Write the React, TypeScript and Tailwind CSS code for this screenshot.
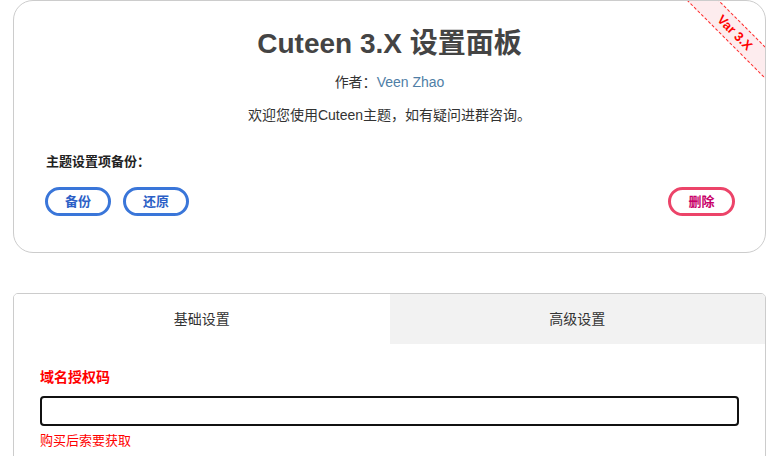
export default function App() {
  const font = { fontFamily: '"Liberation Sans", Arial, "Noto Sans CJK SC", sans-serif' };
  return (
    <div className="w-[766px] h-[456px] overflow-hidden bg-white pl-[13px] text-[#333]" style={font}>
      <div className="relative w-[753px] rounded-[20px] border border-[#cccccc] overflow-hidden pt-[25px] pb-[36px] px-[31px]">
        <div className="absolute right-[-42px] top-[20px] w-[144px] h-[23px] rotate-45 bg-[#fdecee] border-y border-dashed border-[#ff2a2a] flex items-center justify-center">
          <span className="text-[13px] font-bold text-[#ff0000] leading-none">Var 3.X</span>
        </div>
        <h1 className="text-center text-[28px] leading-[36px] font-bold text-[#444444]">Cuteen 3.X 设置面板</h1>
        <p className="mt-[10px] text-center text-[14px] leading-[20px] text-[#333]">
          作者：<span className="text-[#4f7ea6]">Veen Zhao</span>
        </p>
        <p className="mt-[13px] text-center text-[14px] leading-[20px] text-[#333]">欢迎您使用Cuteen主题，如有疑问进群咨询。</p>
        <p className="mt-[27px] ml-[1px] text-[13px] leading-[20px] font-bold text-[#222]">主题设置项备份：</p>
        <div className="mt-[15px] flex items-center">
          <button className="w-[66px] h-[29px] rounded-full border-[3px] border-[#3a76d9] text-[#2c5fc6] text-[13px] font-bold flex items-center justify-center">备份</button>
          <button className="ml-[12px] w-[66px] h-[29px] rounded-full border-[3px] border-[#3a76d9] text-[#2c5fc6] text-[13px] font-bold flex items-center justify-center">还原</button>
          <button className="ml-auto mr-[-1px] w-[67px] h-[29px] rounded-full border-[3px] border-[#ec4469] text-[#c8006a] text-[13px] font-bold flex items-center justify-center">删除</button>
        </div>
      </div>

      <div className="mt-[40px] w-[753px] rounded-[5px] border border-[#cccccc] overflow-hidden">
        <div className="grid grid-cols-2 h-[50px]">
          <div className="flex items-center justify-center text-[14px] text-[#333] bg-white">基础设置</div>
          <div className="flex items-center justify-center text-[14px] text-[#333] bg-[#f2f2f2]">高级设置</div>
        </div>
        <div className="px-[26px] pt-[23px] pb-[20px]">
          <p className="text-[14px] leading-[20px] font-bold text-[#ff0000]">域名授权码</p>
          <input className="mt-[9px] block w-full h-[30px] rounded-[4px] border-2 border-[#111] bg-white outline-none" />
          <p className="mt-[6px] text-[13px] leading-[18px] text-[#ff0000]">购买后索要获取</p>
        </div>
      </div>
    </div>
  );
}
